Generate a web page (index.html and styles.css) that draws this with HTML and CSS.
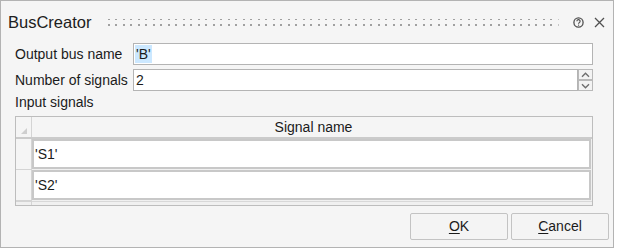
FILE: index.html
```html
<!DOCTYPE html>
<html>
<head>
<meta charset="utf-8">
<link rel="stylesheet" href="styles.css">
</head>
<body>
<div class="dialog">
  <div class="titlebar">
    <span class="title">BusCreator</span>
    <svg class="grip" width="100%" height="8">
      <defs>
        <pattern id="dots" width="15" height="6" patternUnits="userSpaceOnUse">
          <rect x="0" y="0" width="2" height="2" fill="#a0a0a0"/>
          <rect x="7" y="0" width="2" height="2" fill="#a0a0a0"/>
        </pattern>
      </defs>
      <rect x="0" y="1" width="100%" height="8" fill="url(#dots)"/>
    </svg>
    <svg class="help" width="11" height="11" viewBox="0 0 11 11">
      <circle cx="5.5" cy="5.5" r="4.6" fill="none" stroke="#505050" stroke-width="1.3"/>
      <path d="M3.9 4.3 a1.6 1.6 0 1 1 2.3 1.4 c-0.5 0.25 -0.7 0.5 -0.7 1.1" fill="none" stroke="#505050" stroke-width="1.2"/>
      <rect x="5" y="7.6" width="1.1" height="1.1" fill="#505050"/>
    </svg>
    <svg class="close" width="11" height="11" viewBox="0 0 11 11">
      <path d="M1 1 L10 10 M10 1 L1 10" stroke="#505050" stroke-width="1.3" fill="none"/>
    </svg>
  </div>
  <div class="form">
    <div class="field">
      <label class="label">Output bus name</label>
      <div class="input"><span class="sel">'B'</span></div>
    </div>
    <div class="field field-second">
      <label class="label">Number of signals</label>
      <div class="input input-num">2</div>
      <div class="spinner">
        <div class="spin">
          <svg width="9" height="6" viewBox="0 0 9 6"><path d="M1 4.8 L4.5 1.3 L8 4.8" fill="none" stroke="#6e6e6e" stroke-width="1.4"/></svg>
        </div>
        <div class="spin">
          <svg width="9" height="6" viewBox="0 0 9 6"><path d="M1 1.2 L4.5 4.7 L8 1.2" fill="none" stroke="#6e6e6e" stroke-width="1.4"/></svg>
        </div>
      </div>
    </div>
    <div class="section">Input signals</div>
    <div class="table">
      <div class="thead">
        <div class="corner"><span class="tri"></span></div>
        <div class="colhead">Signal name</div>
      </div>
      <div class="trow">
        <div class="rowhead"></div>
        <div class="cell">'S1'</div>
      </div>
      <div class="trow">
        <div class="rowhead"></div>
        <div class="cell">'S2'</div>
      </div>
      <div class="tfoot">
        <div class="rowfoot"></div>
        <div class="cellfoot"></div>
      </div>
    </div>
    <div class="buttons">
      <button class="btn"><u>O</u>K</button>
      <button class="btn"><u>C</u>ancel</button>
    </div>
  </div>
</div>
</body>
</html>
```

FILE: styles.css
```css
* { box-sizing: border-box; }
html, body { margin: 0; padding: 0; background: #ffffff; }
body { font-family: "Liberation Sans", Arial, sans-serif; color: #1b1b1b; }

.dialog {
  width: 614px;
  height: 248px;
  border: 1px solid #b3b3b3;
  background: #f5f5f5;
}

.titlebar {
  height: 42px;
  display: flex;
  align-items: center;
  padding: 0 8px 0 7px;
}
.title {
  font-size: 16.5px;
  line-height: 18px;
  color: #202020;
}
.grip {
  flex: 1;
  display: block;
  margin: 0 14px 0 17px;
}
.help { display: block; }
.close { display: block; margin-left: 10px; }

.form {
  padding: 0 20px 0 14px;
}
.field {
  display: flex;
  align-items: center;
  height: 22px;
}
.field-second { margin-top: 4px; }
.label {
  width: 118px;
  font-size: 14px;
  line-height: 16px;
  white-space: nowrap;
}
.input {
  flex: 1;
  height: 22px;
  border: 1px solid #b4b4b4;
  background: #ffffff;
  font-size: 14px;
  line-height: 18px;
  padding: 1px 0 0 1px;
}
.input-num { padding-left: 2px; line-height: 19px; }
.sel {
  display: inline-block;
  background: #cce8ff;
  padding: 0 1px;
  line-height: 18px;
}
.spinner {
  width: 15px;
  height: 22px;
  display: flex;
  flex-direction: column;
}
.spin {
  height: 11px;
  border: 1px solid #b9b9b9;
  background: #f3f3f3;
  display: flex;
  align-items: center;
  justify-content: center;
}
.spin svg { display: block; }

.section {
  margin-top: 3px;
  font-size: 14px;
  line-height: 17px;
  height: 17px;
}

.table {
  margin-top: 5px;
  height: 90px;
  border: 1px solid #bdbdbd;
  background: #f0f0f0;
  display: flex;
  flex-direction: column;
}
.thead {
  display: flex;
  height: 22px;
  border-bottom: 2px solid #cbcbcb;
  background: #f5f5f5;
}
.corner {
  width: 16px;
  border-right: 1px solid #d4d4d4;
  position: relative;
}
.tri {
  position: absolute;
  left: 5px;
  top: 11px;
  width: 0;
  height: 0;
  border-left: 6px solid transparent;
  border-bottom: 6px solid #cfcfcf;
}
.colhead {
  flex: 1;
  text-align: center;
  font-size: 14px;
  line-height: 20px;
  padding-left: 3px;
}
.trow {
  display: flex;
  height: 31px;
}
.rowhead {
  width: 16px;
  border-right: 1px solid #d4d4d4;
  border-bottom: 1px solid #d4d4d4;
  background: #f5f5f5;
}
.cell {
  flex: 1;
  height: 30px;
  margin-right: 1px;
  background: #ffffff;
  border: 2px solid #c8c8c8;
  font-size: 14px;
  line-height: 27px;
  padding-left: 1px;
}
.tfoot {
  display: flex;
  flex: 1;
}
.rowfoot {
  width: 16px;
  border-right: 1px solid #d4d4d4;
  border-top: 1px solid #d4d4d4;
}
.cellfoot {
  flex: 1;
  border-top: 1px solid #d8d8d8;
}

.buttons {
  margin-top: 7px;
  margin-right: -16px;
  display: flex;
  justify-content: flex-end;
  gap: 3px;
}
.btn {
  width: 98px;
  height: 27px;
  border: 1px solid #c3c3c3;
  border-radius: 2px;
  background: #f4f4f4;
  font-family: "Liberation Sans", Arial, sans-serif;
  font-size: 14px;
  color: #1b1b1b;
  padding: 0;
  line-height: 25px;
}
.btn u { text-decoration-thickness: 1px; text-underline-offset: 2px; }
```
